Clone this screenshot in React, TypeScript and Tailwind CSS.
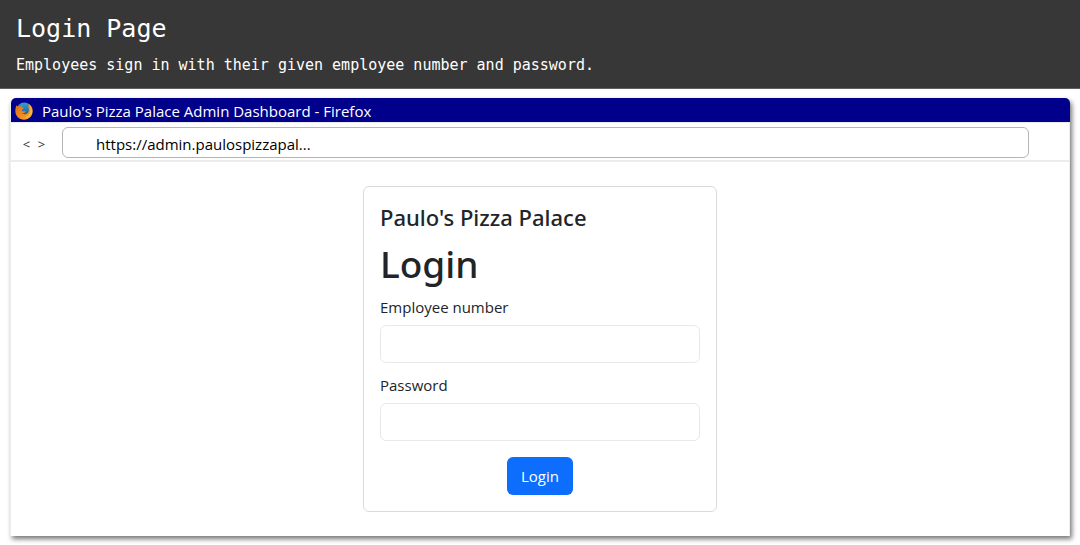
import React from "react";

function FirefoxLogo() {
  return (
    <svg viewBox="0 0 18 18" className="size-[18px] shrink-0" aria-hidden="true">
      <defs>
        <linearGradient id="globe" x1="0" y1="0" x2="0" y2="1">
          <stop offset="0" stopColor="#2f9fd0" />
          <stop offset="1" stopColor="#1a4f96" />
        </linearGradient>
        <linearGradient id="fox" x1="0" y1="0" x2="1" y2="1">
          <stop offset="0" stopColor="#d9681d" />
          <stop offset="0.6" stopColor="#f0901e" />
          <stop offset="1" stopColor="#fbb62c" />
        </linearGradient>
      </defs>
      <circle cx="9.2" cy="8.2" r="7.6" fill="url(#globe)" />
      <path
        d="M1.4 3.2 C1.9 3.8 2.4 4.2 3 4.3 C3.9 4 4.8 4.1 5.4 4.5 C5.9 3.7 6.7 3.2 7.5 3 C6.9 3.8 6.8 4.6 7.1 5.4 L8.9 5.8 C9 6.7 7.4 7.1 7 7.9 C6.8 8.6 7.2 9.2 8.2 9.3 C9.2 9.4 9.8 8.9 10.7 9.3 C10.2 10.8 8.7 11.5 7.1 11.2 C8.8 12.9 12 12.6 13.3 10.2 C14.4 8.2 14 5.4 12.6 3.5 C13.5 3.8 14.2 4.5 14.6 5.2 C14.5 3.8 13.9 2.4 12.8 1.5 C15.8 2.6 17.8 5.7 17.7 9 C17.7 13.9 13.8 17.7 9 17.7 C4.1 17.7 0.3 13.8 0.3 9 C0.3 6.8 0.8 4.8 1.4 3.2 Z"
        fill="url(#fox)"
      />
      <path
        d="M14.6 5.2 C16.5 9.4 14.4 14.3 10.1 15.3 C13.1 16.5 17.1 13.5 17.2 9 C17.3 6.3 15.5 3.3 13.4 2 C14.2 3 14.5 4.1 14.6 5.2 Z"
        fill="#fdb53c"
      />
    </svg>
  );
}

function Field({ id, label, type }: { id: string; label: string; type: string }) {
  return (
    <div className="mb-[10px]">
      <label htmlFor={id} className="mb-[6px] block text-[15px] leading-6">
        {label}
      </label>
      <input
        id={id}
        type={type}
        className="block h-[38px] w-full rounded-md border border-[#e6e8ea] bg-white px-3 text-[15px] outline-none focus:border-[#86b7fe]"
      />
    </div>
  );
}

export default function App() {
  return (
    <div className="bg-white font-['Open_Sans','Noto_Sans',sans-serif] text-[#212529]">
      <header className="border-b border-[#606060] bg-[#373737] px-4 pt-[13px] pb-[11px] font-['DejaVu_Sans_Mono','Liberation_Mono',monospace] text-white">
        <h1 className="text-[25px] leading-8">Login Page</h1>
        <p className="mt-2 text-[15px] leading-6">
          Employees sign in with their given employee number and password.
        </p>
      </header>

      <section className="mx-[10px] mt-[9px] mb-[10px] rounded-t-[5px] border-x border-[#eeeeee] bg-white shadow-[2px_3px_5px_#777777]">
        <div className="-mr-px flex h-6 items-center gap-[9px] rounded-t-[5px] bg-[#00008b] pt-[2px] pl-1 text-[15px] text-white">
          <FirefoxLogo />
          <span>Paulo's Pizza Palace Admin Dashboard - Firefox</span>
        </div>

        <div className="flex items-center border-t border-b-2 border-[#ebebeb] pt-1 pr-10 pb-[2px] pl-[11px]">
          <nav className="mr-4 flex gap-[6px] pt-1 text-[13px] text-[#333333]">
            <button type="button" aria-label="Back" className="w-[9px]">
              &lt;
            </button>
            <button type="button" aria-label="Forward" className="w-[9px]">
              &gt;
            </button>
          </nav>
          <input
            type="text"
            aria-label="Address"
            defaultValue="https://admin.paulospizzapal..."
            className="h-[31px] min-w-0 flex-1 rounded-md border border-[#b5b5b5] bg-white px-[33px] pt-[2px] text-[15px] text-black outline-none"
          />
        </div>

        <main className="flex justify-center py-6">
          <form
            onSubmit={(event) => event.preventDefault()}
            className="w-full max-w-[354px] rounded-md border border-[#d9dadb] p-4"
          >
            <h2 className="font-['Noto_Sans','Open_Sans',sans-serif] text-[22px] leading-7 font-medium">
              Paulo's Pizza Palace
            </h2>
            <h3 className="mt-2 mb-[6px] font-['Noto_Sans','Open_Sans',sans-serif] text-[37px] leading-[50px] font-medium">
              Login
            </h3>
            <Field id="employee-number" label="Employee number" type="text" />
            <Field id="password" label="Password" type="password" />
            <div className="mt-4 flex justify-center">
              <button
                type="submit"
                className="h-[38px] rounded-md bg-[#0d6efd] px-[14px] text-[15px] text-white"
              >
                Login
              </button>
            </div>
          </form>
        </main>
      </section>
    </div>
  );
}
